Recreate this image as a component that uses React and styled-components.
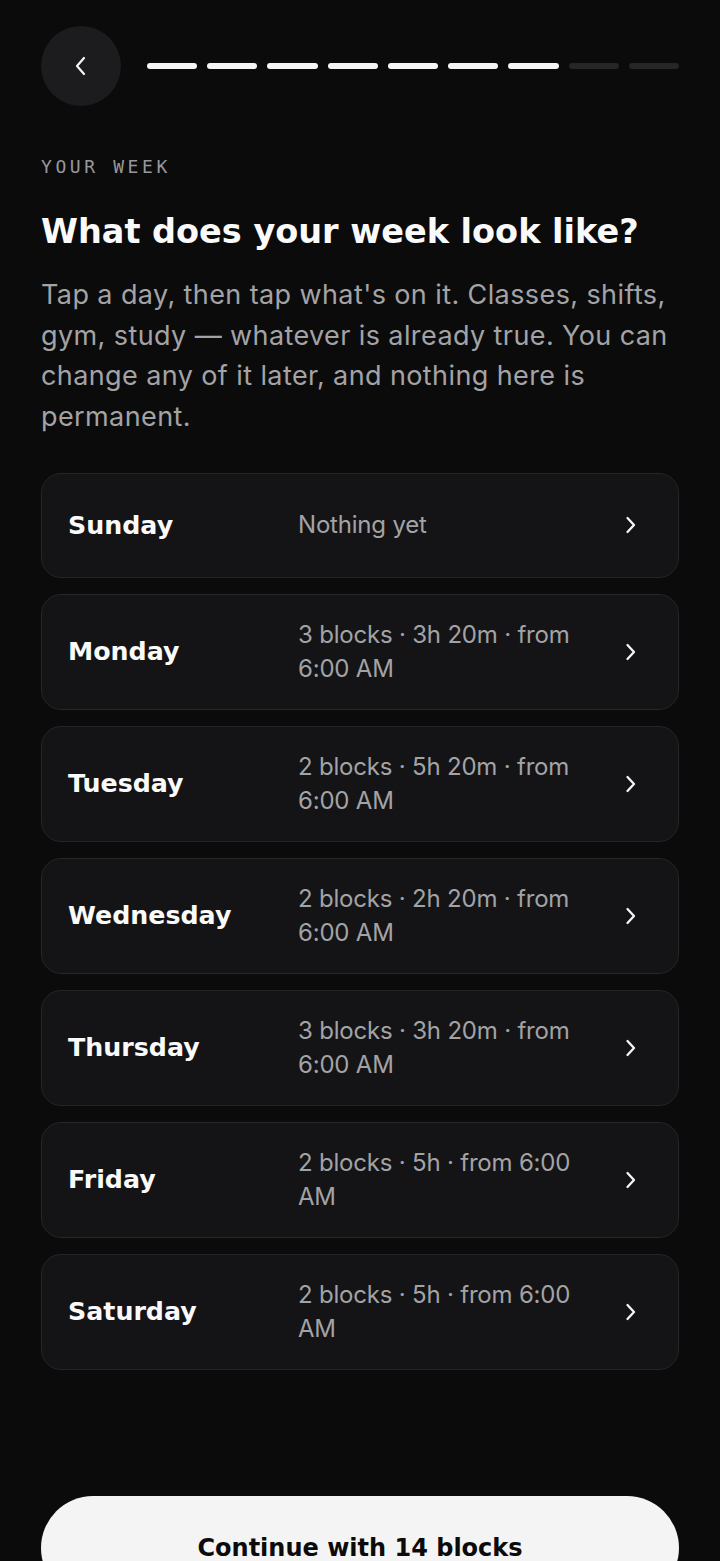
import React from "react";
import styled, { createGlobalStyle } from "styled-components";

const Global = createGlobalStyle`
  html, body { margin: 0; padding: 0; background: #0b0b0c; }
  body { font-family: Inter, "Noto Sans", sans-serif; color: #fff; -webkit-font-smoothing: antialiased; }
  * { box-sizing: border-box; }
`;

const boldFont = `"DejaVu Sans", Inter, sans-serif`;

const Page = styled.div`
  padding: 26px 41px 0 41px;
  display: flex;
  flex-direction: column;
`;

const TopBar = styled.div`
  display: flex;
  align-items: center;
  gap: 26px;
`;

const BackButton = styled.button`
  width: 80px;
  height: 80px;
  border-radius: 50%;
  border: none;
  background: #1c1c1e;
  display: flex;
  align-items: center;
  justify-content: center;
  padding: 0;
  flex-shrink: 0;
`;

const Progress = styled.div`
  flex: 1;
  display: flex;
  gap: 10px;
`;

const Segment = styled.div`
  flex: 1;
  height: 6px;
  border-radius: 3px;
  background: ${(p) => (p.$active ? "#f5f5f5" : "#262628")};
`;

const Eyebrow = styled.div`
  margin-top: 51px;
  font-family: "DejaVu Sans Mono", "Liberation Mono", monospace;
  font-size: 18px;
  line-height: 20px;
  letter-spacing: 3.6px;
  color: #98989b;
`;

const Title = styled.h1`
  margin: 34px 0 0 0;
  font-family: ${boldFont};
  font-size: 33.5px;
  line-height: 42px;
  font-weight: 700;
  color: #fafafa;
`;

const Lead = styled.p`
  margin: 22px 0 0 0;
  font-size: 27px;
  line-height: 40.7px;
  color: #a3a3a6;
  letter-spacing: 0.4px;
`;

const List = styled.div`
  margin-top: 35px;
  display: flex;
  flex-direction: column;
  gap: 16px;
`;

const DayCard = styled.div`
  min-height: 105px;
  padding: 23px 41px 23px 26px;
  border: 1px solid #262628;
  border-radius: 20px;
  background: #141416;
  display: grid;
  grid-template-columns: 214px 1fr 12px;
  column-gap: 16px;
  align-items: center;
`;

const DayName = styled.div`
  font-family: ${boldFont};
  font-size: 25.3px;
  font-weight: 700;
  color: #fafafa;
`;

const Summary = styled.div`
  font-size: 24px;
  line-height: 34px;
  color: #a3a3a6;
  letter-spacing: -0.2px;
`;

const Chevron = styled.div`
  display: flex;
  align-items: center;
`;

const Continue = styled.button`
  margin-top: 126px;
  height: 104px;
  border: none;
  border-radius: 52px;
  background: #f4f4f4;
  color: #0b0b0c;
  font-family: ${boldFont};
  font-size: 24px;
  font-weight: 700;
  width: 100%;
`;

const days = [
  ["Sunday", "Nothing yet"],
  ["Monday", "3 blocks · 3h 20m · from 6:00 AM"],
  ["Tuesday", "2 blocks · 5h 20m · from 6:00 AM"],
  ["Wednesday", "2 blocks · 2h 20m · from 6:00 AM"],
  ["Thursday", "3 blocks · 3h 20m · from 6:00 AM"],
  ["Friday", "2 blocks · 5h · from 6:00 AM"],
  ["Saturday", "2 blocks · 5h · from 6:00 AM"],
];

export default function App() {
  return (
    <>
      <Global />
      <Page>
        <TopBar>
          <BackButton aria-label="Back">
            <svg width="14" height="24" viewBox="0 0 14 24" fill="none">
              <polyline points="10,4 3,12 10,20" stroke="#f5f5f5" strokeWidth="2.2" strokeLinecap="round" strokeLinejoin="round" />
            </svg>
          </BackButton>
          <Progress>
            {Array.from({ length: 9 }).map((_, i) => (
              <Segment key={i} $active={i < 7} />
            ))}
          </Progress>
        </TopBar>
        <Eyebrow>YOUR WEEK</Eyebrow>
        <Title>What does your week look like?</Title>
        <Lead>
          Tap a day, then tap what's on it. Classes, shifts, gym, study — whatever is already true. You can change any of it later, and nothing here is permanent.
        </Lead>
        <List>
          {days.map(([d, s]) => (
            <DayCard key={d}>
              <DayName>{d}</DayName>
              <Summary>{s}</Summary>
              <Chevron>
                <svg width="12" height="20" viewBox="0 0 12 20" fill="none">
                  <polyline points="2.5,3 9,10 2.5,17" stroke="#f5f5f5" strokeWidth="2.3" strokeLinecap="round" strokeLinejoin="round" />
                </svg>
              </Chevron>
            </DayCard>
          ))}
        </List>
        <Continue>Continue with 14 blocks</Continue>
      </Page>
    </>
  );
}
